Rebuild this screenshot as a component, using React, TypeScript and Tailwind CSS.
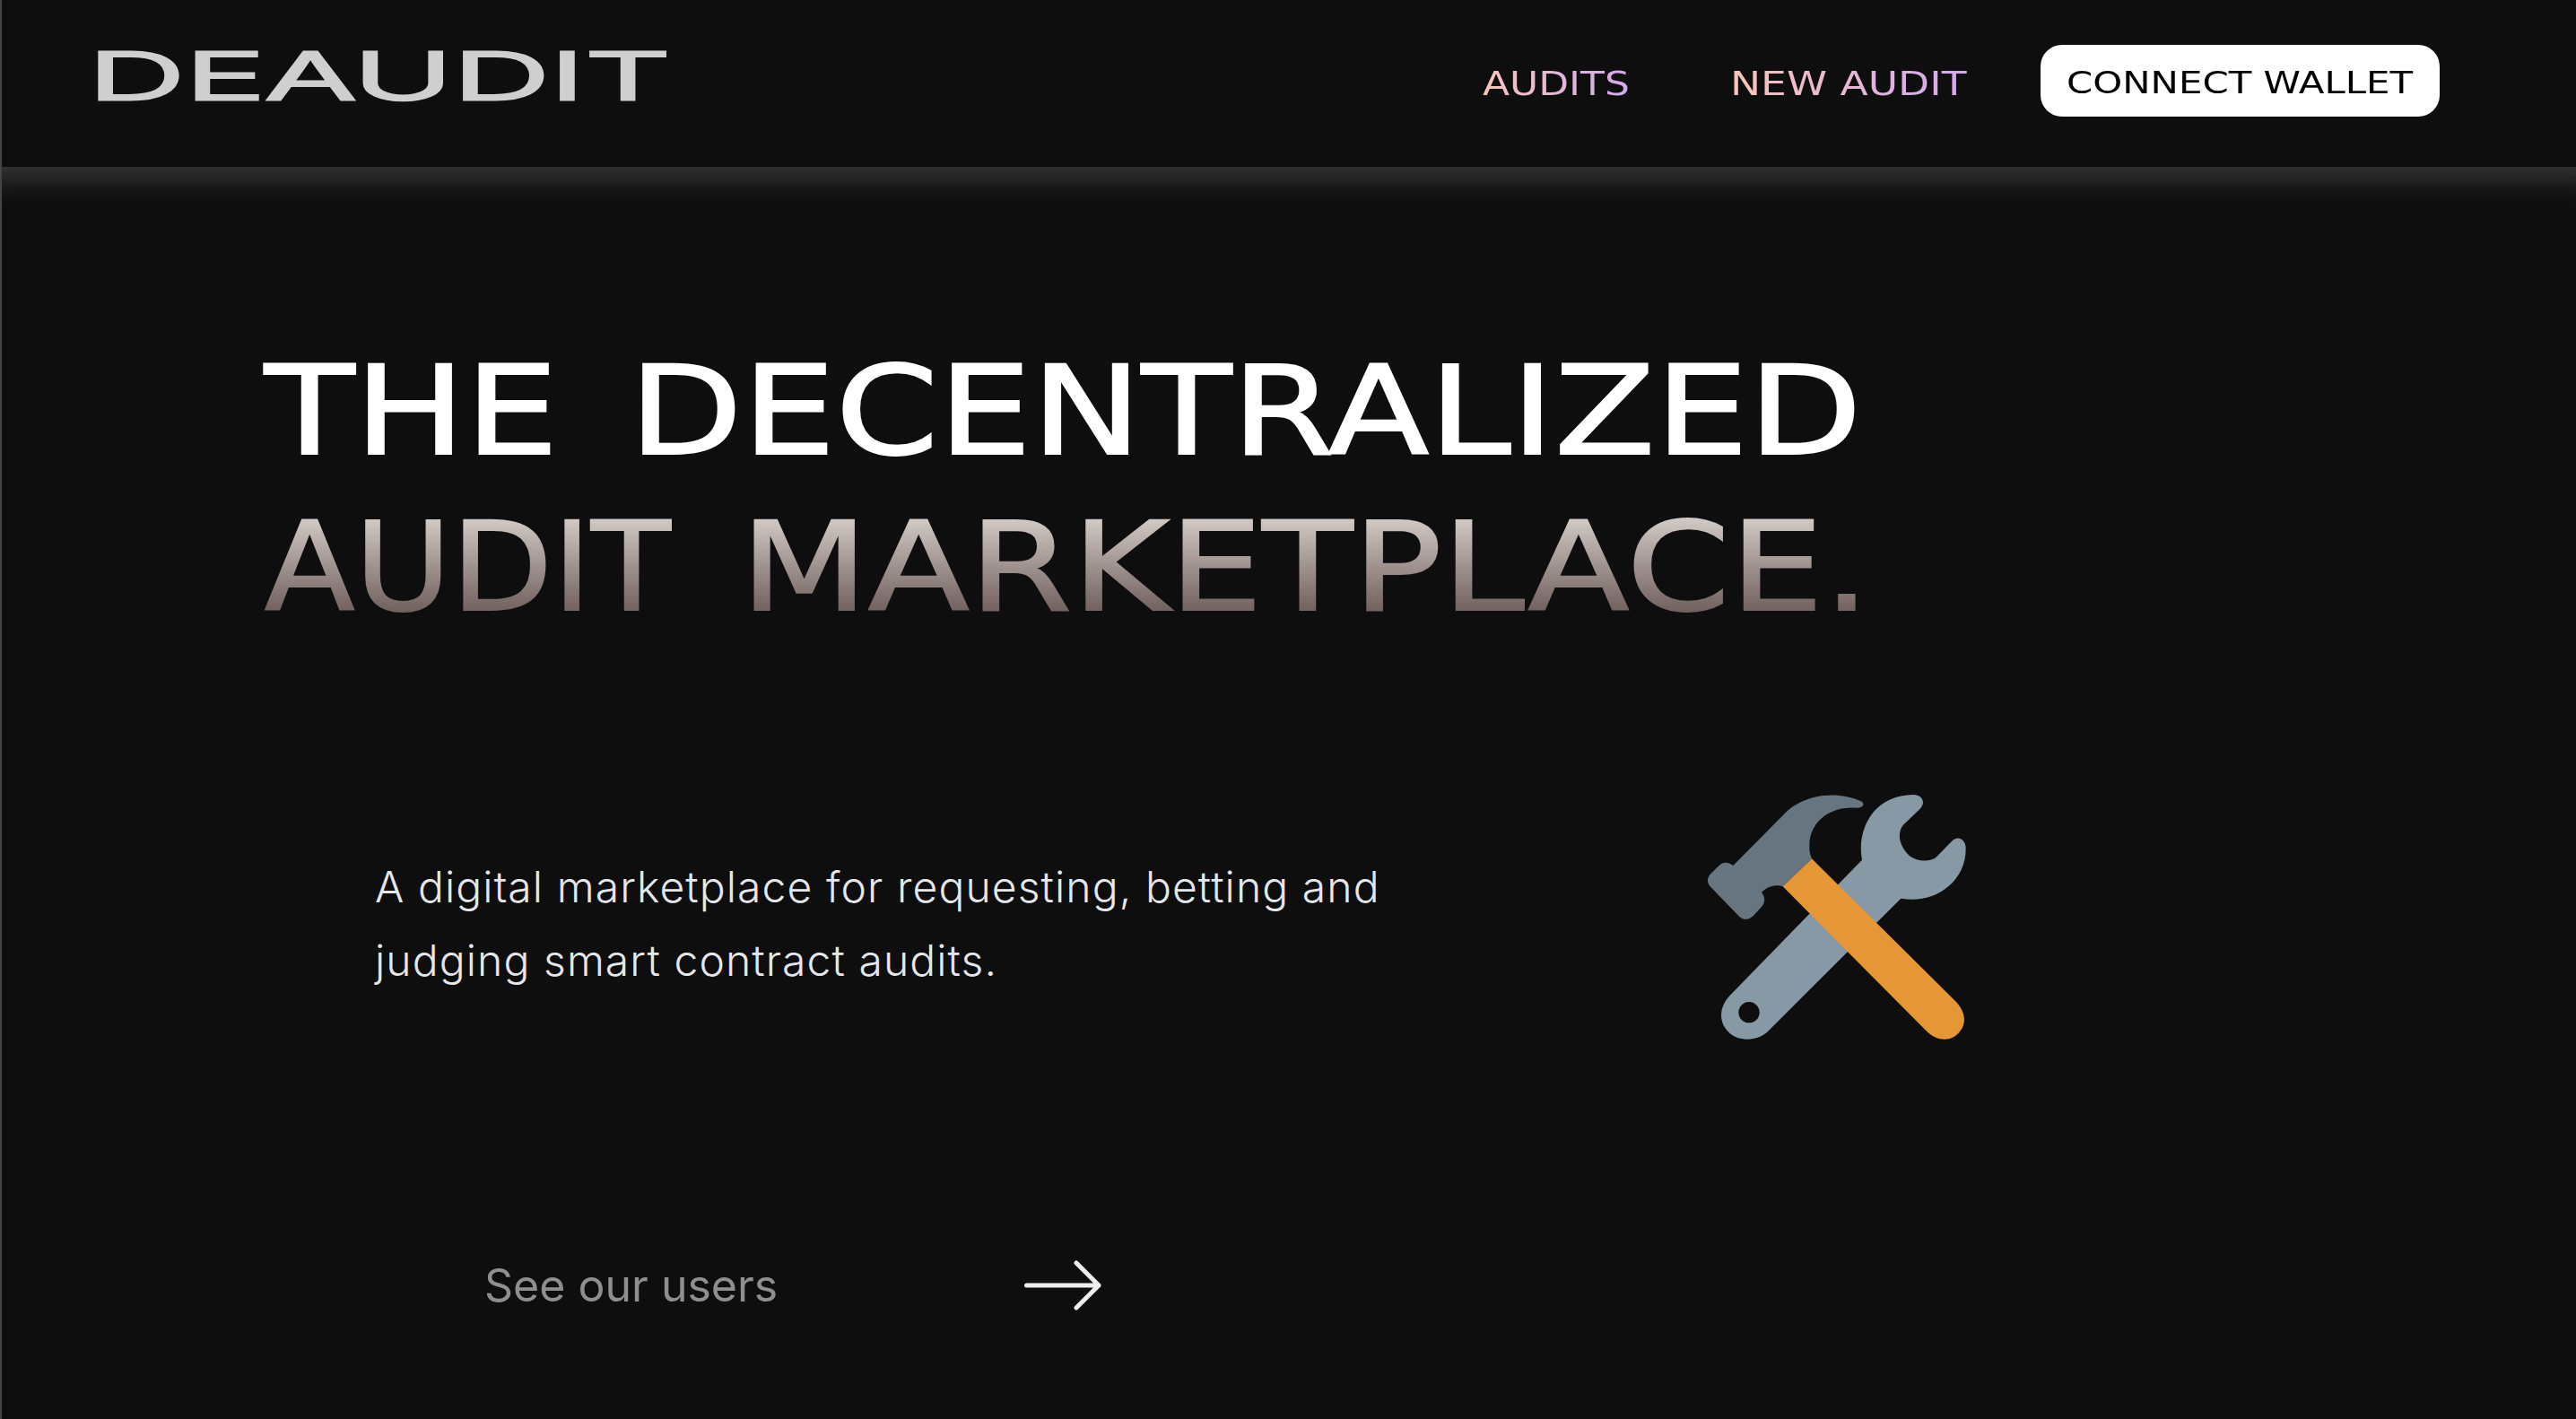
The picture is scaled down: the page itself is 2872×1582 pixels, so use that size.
export default function App() {
  return (
    <div className="h-[1582px] w-full overflow-hidden bg-[#0e0e0e] border-l-2 border-[#444444] font-['Liberation_Sans',sans-serif]">
      <header className="h-[186px] pl-[96px] pr-[152px] flex items-start justify-between">
        <div className="mt-[40px] origin-left scale-x-[2.06] font-['Inter',sans-serif] font-light [-webkit-text-stroke:3px_#cfcfcf] text-[73px] leading-[90px] text-[#cfcfcf]">DEAUDIT</div>
        <nav className="flex items-center h-[80px] mt-[50px]">
          <div className="w-[276px] pt-[6px]">
            <a className="inline-block origin-left scale-x-[1.157] font-['DejaVu_Sans',sans-serif] text-[38px] bg-gradient-to-r from-[#f9c5b8] to-[#d4a8f0] bg-clip-text text-transparent">AUDITS</a>
          </div>
          <div className="w-[346px] pt-[6px]">
            <a className="inline-block origin-left scale-x-[1.2] font-['DejaVu_Sans',sans-serif] text-[38px] bg-gradient-to-r from-[#f9c5b8] to-[#d4a8f0] bg-clip-text text-transparent">NEW AUDIT</a>
          </div>
          <button className="w-[445px] h-[80px] pt-[6px] rounded-[24px] bg-white text-black font-['DejaVu_Sans',sans-serif] text-[33px]">
            <span className="inline-block scale-x-[1.27]">CONNECT WALLET</span>
          </button>
        </nav>
      </header>
      <main className="relative h-[1396px] pl-[293px] pt-[186px] shadow-[inset_0_40px_28px_-24px_#343434]">
        <h1 className="font-['DejaVu_Sans',sans-serif] text-[137px] leading-[174px]">
          <div className="origin-left scale-x-[1.199] [word-spacing:22px] [-webkit-text-stroke:2px_white] text-white">THE DECENTRALIZED</div>
          <div className="flex w-max gap-[64px] origin-left scale-x-[1.204]">
            <span className="inline-block -mr-[47px] origin-left scale-x-[0.89] [-webkit-text-stroke:2px_transparent] bg-gradient-to-b from-[#d3cbc6] from-[18%] to-[#6b5a58] to-[82%] bg-clip-text text-transparent">AUDIT</span>
            <span className="inline-block [-webkit-text-stroke:2px_transparent] bg-gradient-to-b from-[#d3cbc6] from-[18%] to-[#6b5a58] to-[82%] bg-clip-text text-transparent">MARKETPLACE.</span>
          </div>
        </h1>
        <div className="mt-[228px] flex items-start">
          <p className="ml-[123px] w-[1300px] font-['Inter',sans-serif] font-light text-[48px] tracking-[1.1px] leading-[82px] text-[#e5e7eb]">A digital marketplace for requesting, betting and<br />judging smart contract audits.</p>
          <svg viewBox="0 0 1080 960" className="w-[360px] h-[320px] ml-[142px] -mt-[88px]">
            <path fill="#8899a6" fillRule="evenodd" d="M215 740 L648 296 C630 200 680 80 820 78 C850 78 862 105 842 125 L785 180 C760 215 780 260 810 285 C840 305 880 300 895 288 L950 232 C975 210 997 235 995 260 C995 370 890 445 778 425 L335 868 C300 905 230 905 200 870 C165 835 170 780 215 740 Z M305 806 A35 35 0 1 0 235 806 A35 35 0 1 0 305 806 Z" />
            <path fill="#66757f" d="M480 292 L383 385 C365 378 335 380 312 405 C325 420 325 440 310 455 L285 482 C270 498 250 498 237 485 L140 385 C128 370 130 355 142 342 L170 315 C185 300 205 305 217 315 L390 140 C450 80 560 60 645 100 C660 110 650 122 630 122 C540 115 470 170 472 250 C472 270 475 280 480 292 Z" />
            <path fill="#e59736" d="M480 292 L383 385 L865 870 C900 905 950 905 975 870 C1000 840 992 800 960 768 Z" />
          </svg>
        </div>
        <div className="ml-[245px] mt-[223px] flex items-center h-[60px]">
          <span className="w-[602px] font-['Inter',sans-serif] text-[50px] text-[#8f8f8f]">See our users</span>
          <svg viewBox="0 0 90 56" className="w-[90px] h-[56px]" fill="none" stroke="#eeeeee" strokeWidth="5" strokeLinecap="round" strokeLinejoin="round">
            <path d="M2.5 28 H83 M58 3 L83 28 L58 53" />
          </svg>
        </div>
      </main>
    </div>
  );
}
